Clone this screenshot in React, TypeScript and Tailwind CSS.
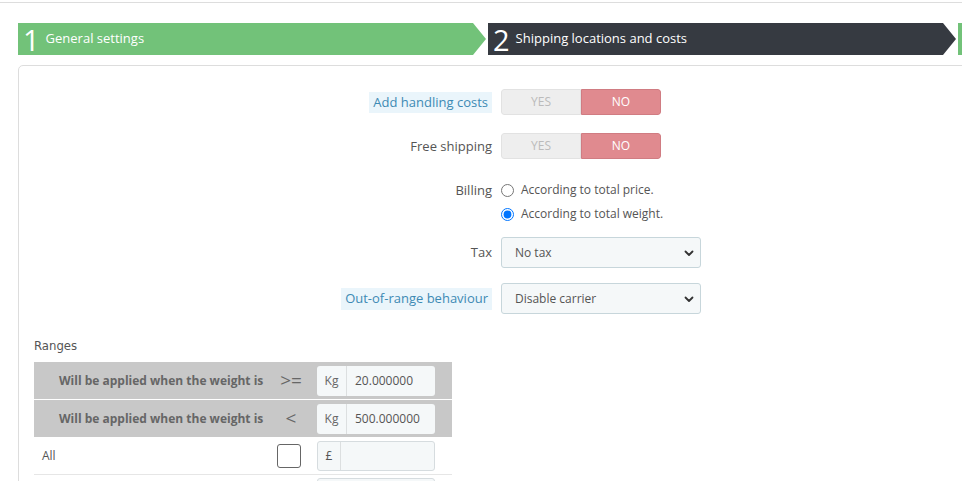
import React from 'react';

// Carrier wizard: step bar + shipping settings form
const font = { fontFamily: '"Open Sans", "Liberation Sans", sans-serif' };

const Step: React.FC<{ n: string; label: string; bg: string; width: string }> = ({ n, label, bg, width }) => (
  <div
    className={`${bg} ${width} h-[32px] flex items-center text-white shrink-0 [clip-path:polygon(0_0,calc(100%-13px)_0,100%_50%,calc(100%-13px)_100%,0_100%)]`}
  >
    <span className="text-[29px] font-normal leading-none ml-[5px] mr-[6px] mt-[1px]">{n}</span>
    <span className="text-[13px]">{label}</span>
  </div>
);

const Toggle: React.FC = () => (
  <div className="flex w-[160px] h-[26px] text-[12px] rounded-[3px] overflow-hidden">
    <div className="w-[80px] flex items-center justify-center bg-[#eeeeee] text-[#bbbbbb] border border-[#e2e2e2] rounded-l-[3px]">YES</div>
    <div className="w-[80px] flex items-center justify-center bg-[#e08a8f] text-white border border-[#d07c82] rounded-r-[3px]">NO</div>
  </div>
);

const Chevron = () => (
  <svg width="10" height="7" viewBox="0 0 10 7" className="mr-[6px]">
    <path d="M1.5 1.5 L5 5 L8.5 1.5" fill="none" stroke="#333" strokeWidth="1.8" strokeLinecap="round" strokeLinejoin="round" />
  </svg>
);

const Select: React.FC<{ value: string }> = ({ value }) => (
  <div className="w-[200px] h-[31px] flex items-center justify-between bg-[#f5f8f9] border border-[#c7d6db] rounded-[3px] pl-[13px] pt-[1px] text-[12px] text-[#555]">
    <span>{value}</span>
    <Chevron />
  </div>
);

const Row: React.FC<{ label: React.ReactNode; className?: string; children: React.ReactNode }> = ({ label, className = '', children }) => (
  <div className={`flex items-center ${className}`}>
    <div className="w-[473px] flex justify-end text-[13px] pt-[1px]">{label}</div>
    <div className="ml-[9px]">{children}</div>
  </div>
);

const HelpLabel: React.FC<{ text: string }> = ({ text }) => (
  <span className="bg-[#eaf5fb] text-[#3d8ab4] px-[4px] py-[1px]">{text}</span>
);

const Plain: React.FC<{ text: string }> = ({ text }) => <span className="text-[#555]">{text}</span>;

const RangeRow: React.FC<{ op: string; value: string; className?: string }> = ({ op, value, className = '' }) => (
  <div className={`flex items-center bg-[#c8c8c8] ${className}`}>
    <div className="w-[236px] pl-[25px] text-[12px] font-bold text-[#666]">Will be applied when the weight is</div>
    <div className="w-[42px] text-center text-[19px] font-normal text-[#666]">{op}</div>
    <div className="ml-[5px] flex h-[30px] w-[118px] rounded-[3px] overflow-hidden bg-[#f5f8f9] text-[12px] text-[#555]">
      <div className="w-[30px] flex items-center justify-center border-r border-[#dcdfe0] text-[#666]">Kg</div>
      <div className="flex items-center pl-[8px]">{value}</div>
    </div>
  </div>
);

export default function App() {
  return (
    <div className="w-[962px] h-[481px] overflow-hidden bg-white" style={font}>
      <div className="h-[3px] border-b border-[#dddddd]" />

      {/* wizard steps */}
      <div className="flex gap-[2px] mt-[20px] ml-[18px]">
        <Step n="1" label="General settings" bg="bg-[#72c279]" width="w-[468px]" />
        <Step n="2" label="Shipping locations and costs" bg="bg-[#363a41]" width="w-[468px]" />
        <div className="w-[40px] h-[32px] bg-[#72c279] shrink-0" />
      </div>

      {/* settings panel */}
      <div className="ml-[18px] mt-[10px] w-[1000px] h-[500px] border border-[#dddddd] rounded-[5px] pt-[23px]">
        <Row label={<HelpLabel text="Add handling costs" />}>
          <Toggle />
        </Row>
        <Row label={<Plain text="Free shipping" />} className="mt-[18px]">
          <Toggle />
        </Row>

        <div className="mt-[19px]">
          <Row label={<Plain text="Billing" />} className="h-[24px]">
            <label className="flex items-center text-[12px] text-[#555]">
              <input type="radio" name="billing" className="w-[13px] h-[13px] m-0" />
              <span className="ml-[7px]">According to total price.</span>
            </label>
          </Row>
          <Row label={null} className="h-[24px]">
            <label className="flex items-center text-[12px] text-[#555]">
              <input type="radio" name="billing" defaultChecked className="w-[13px] h-[13px] m-0 accent-[#0075ff]" />
              <span className="ml-[7px]">According to total weight.</span>
            </label>
          </Row>
        </div>

        <Row label={<Plain text="Tax" />} className="mt-[11px]">
          <Select value="No tax" />
        </Row>
        <Row label={<HelpLabel text="Out-of-range behaviour" />} className="mt-[15px]">
          <Select value="Disable carrier" />
        </Row>

        {/* ranges table */}
        <div
          className="ml-[15px] mt-[23px] text-[13px] leading-[18px] text-[#555]"
          style={{ fontFamily: '"Liberation Sans Narrow", "DejaVu Sans Condensed", "Open Sans", sans-serif' }}
        >
          Ranges
        </div>
        <div className="ml-[15px] mt-[7px] w-[418px]">
          <RangeRow op=">=" value="20.000000" className="h-[38px] border-b border-white" />
          <RangeRow op="<" value="500.000000" className="h-[37px]" />
          <div className="flex items-center h-[38px] border-b border-[#e6e6e6]">
            <div className="w-[236px] pl-[8px] text-[12px] text-[#555]">All</div>
            <div className="w-[42px] flex justify-start pl-[7px]">
              <div className="w-[24px] h-[24px] border border-[#666] rounded-[3px] bg-white" />
            </div>
            <div className="ml-[5px] flex h-[30px] w-[118px] rounded-[3px] overflow-hidden bg-[#f5f8f9] border border-[#d6dcdf] text-[12px] text-[#555]">
              <div className="w-[23px] flex items-center justify-center border-r border-[#dcdfe0]">£</div>
              <div className="flex-1" />
            </div>
          </div>
          <div className="flex items-start h-[20px]">
            <div className="w-[278px]" />
            <div className="ml-[5px] mt-[3px] h-[30px] w-[118px] rounded-[3px] bg-[#f5f8f9] border border-[#d6dcdf]" />
          </div>
        </div>
      </div>
    </div>
  );
}
